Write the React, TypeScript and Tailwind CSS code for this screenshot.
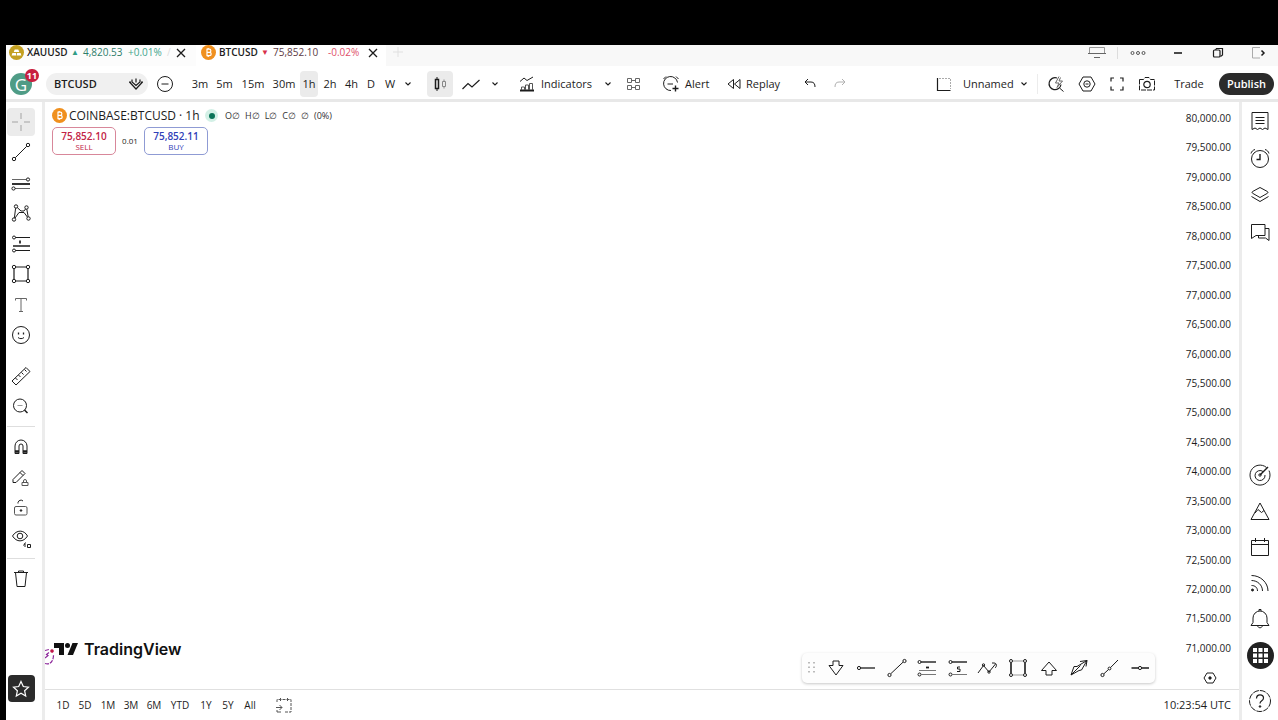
import type { ReactNode } from "react";

function Ic({ children, size = 24, w = 1 }: { children: ReactNode; size?: number; w?: number }) {
  return (
    <svg
      width={size}
      height={size}
      viewBox={`0 0 ${size} ${size}`}
      fill="none"
      stroke="currentColor"
      strokeWidth={w}
      className="shrink-0"
      aria-hidden="true"
    >
      {children}
    </svg>
  );
}

const Chevron = () => (
  <Ic size={12} w={1.1}>
    <path d="M3.500 4.500L6 7l2.500-2.500" />
  </Ic>
);

const BitcoinLogo = () => (
  <svg width="15" height="15" viewBox="0 0 15 15" className="shrink-0" aria-hidden="true">
    <circle cx="7.5" cy="7.5" r="7.5" fill="#f0901e" />
    <path
      d="M5.5 4.2h2.8a1.5 1.5 0 0 1 0 3.1H5.8m2.7 0a1.7 1.7 0 0 1 0 3.4h-3M6 4v7M7.2 3v1.2M7.2 10.8V12"
      stroke="#fff"
      strokeWidth="1.2"
      fill="none"
    />
  </svg>
);

const GoldLogo = () => (
  <svg width="15" height="15" viewBox="0 0 15 15" className="shrink-0" aria-hidden="true">
    <circle cx="7.5" cy="7.5" r="7.5" fill="#c4a021" />
    <path d="M5.700 4.500h3.600l1 2.500H4.700zM3.400 8h3.600l.2 2.500H2.600zM8 8h3.600l.8 2.500H7.800z" fill="#fff" />
  </svg>
);

const CloseX = () => (
  <Ic size={12} w={1.3}>
    <path d="M2 2l8 8M10 2l-8 8" />
  </Ic>
);

const drawTools: [string, ReactNode][] = [
  ["Cross", <path d="M12 3v6M12 15v6M3 12h6M15 12h6" stroke="#a3a3a3" />],
  [
    "Trend line",
    <>
      <circle cx="5" cy="19" r="1.7" />
      <circle cx="19" cy="5" r="1.7" />
      <path d="M6.3 17.7L17.7 6.3" />
    </>,
  ],
  [
    "Fib retracement",
    <>
      <path d="M3 8.500h14.500M6 17.500h15" stroke="#666" />
      <path d="M3 13h18" strokeWidth="1.8" />
      <circle cx="19" cy="8.500" r="1.6" />
      <circle cx="4.500" cy="17.500" r="1.6" />
    </>,
  ],
  [
    "Patterns",
    <>
      <circle cx="7" cy="5.5" r="1.7" />
      <circle cx="17.5" cy="6.5" r="1.7" />
      <circle cx="5" cy="18.5" r="1.7" />
      <circle cx="19.5" cy="17.5" r="1.7" />
      <path d="M6.6 7.2L5.4 16.8M8.3 6.6L12 10h3l1.500-2M6 17l4-5.500h5l3.500 4.700M17.8 8.2l1.4 7.6" />
    </>,
  ],
  [
    "Position",
    <>
      <circle cx="5" cy="5.5" r="1.5" />
      <circle cx="5" cy="18.5" r="1.5" />
      <path d="M6.5 5.5H21M6.5 18.5H21" />
      <path d="M4 14h17M11 8.500v3" strokeWidth="1.7" />
    </>,
  ],
  [
    "Shapes",
    <>
      <path d="M7 5h10M7 19h10M5 7v10M19 7v10" strokeWidth="1.2" />
      <circle cx="5" cy="5" r="1.7" />
      <circle cx="19" cy="5" r="1.7" />
      <circle cx="5" cy="19" r="1.7" />
      <circle cx="19" cy="19" r="1.7" />
    </>,
  ],
  ["Text", <path d="M6.5 7.500V5.500h11v2M12 5.500v13M10 18.500h4" stroke="#666" />],
  [
    "Icons",
    <>
      <circle cx="12" cy="12" r="8.5" />
      <path d="M9.500 9.500v2M14.500 9.500v2" strokeWidth="1.3" />
      <path d="M9 14.500c1.500 1.500 4.500 1.500 6 0" />
    </>,
  ],
];

const measureTools: [string, ReactNode][] = [
  ["Measure", <path d="M3 17L17 3.500l4 4L7 21zM6.500 14l2 2M9.500 11l2 2M12.500 8.500l2 2M15.500 5.500l2 2" />],
  [
    "Zoom in",
    <>
      <circle cx="11" cy="11.500" r="6.500" />
      <path d="M8.500 11.500h5" stroke="#999" />
      <path d="M15.500 16l3 3" strokeWidth="1.500" />
    </>,
  ],
];

const modeTools: [string, ReactNode][] = [
  [
    "Magnet",
    <>
      <path d="M6 18.500V11a6 6 0 0 1 12 0v7.500h-4V11a2 2 0 0 0-4 0v7.500z" />
      <path d="M6 16.500h4M14 16.500h4" strokeWidth="2.500" />
    </>,
  ],
  [
    "Keep drawing",
    <>
      <path d="M4 13.500L13 4.500l3 3-9 9H4zM11 6.500l3 3" />
      <path d="M13 19.500v-3h6v3zM14.500 16.500v-1.500a1.500 1.500 0 0 1 3 0v1.500" stroke="#555" />
    </>,
  ],
  [
    "Lock",
    <>
      <rect x="5.500" y="10.500" width="12.500" height="8.500" rx="1.500" stroke="#555" />
      <path d="M9 7.500V6.500a3 3 0 0 1 5-1.500" />
      <circle cx="12" cy="14.500" r="0.800" fill="currentColor" />
    </>,
  ],
  [
    "Hide",
    <>
      <path d="M3.500 9c4-6.500 11.500-6.500 15 0-4 6.500-11 6.500-15 0z" />
      <circle cx="11" cy="9" r="2.800" />
      <path d="M14.500 18.500l2-3M16 20v-3.500M18.500 20.500h3v-3h-3z" />
    </>,
  ],
];

const sideTop: [string, ReactNode][] = [
  ["Watchlist", <path d="M4 3.500h16v17l-3-1.500-2.500 1.500L12 19l-2.500 1.500L7 19l-3 1.500zM7.500 8.500h9M7.500 11.500h9M7.500 14.500h9" />],
  [
    "Alerts",
    <>
      <circle cx="12" cy="13" r="8.500" />
      <path d="M12 8v5.500H8.500" strokeWidth="1.400" />
      <path d="M3 7.500c.5-2 2-3.500 4-4M21 7.500c-.5-2-2-3.500-4-4" />
    </>,
  ],
  [
    "Layers",
    <>
      <path d="M12 4.500l7 3.800c1.300.7 1.300 1.500 0 2.200l-7 4-7-4c-1.300-.7-1.300-1.500 0-2.200z" />
      <path d="M3.500 13.500L12 18.500l8.500-5" />
    </>,
  ],
  ["Chats", <path d="M3.500 4.500h13.500v11H8l-4.500 3zM17 8.500h4v12l-3.500-2.500h-7v-2.500" />],
];

const sideBottom: [string, ReactNode][] = [
  [
    "Screener",
    <>
      <path d="M18.500 4.500A10 10 0 1 0 22 12a10 10 0 0 0-1-4.400" />
      <path d="M15 8.500a5 5 0 1 0 2 3.500" />
      <path d="M12 12l8-8" strokeWidth="1.400" />
      <circle cx="12" cy="12" r="1.200" />
    </>,
  ],
  ["Pine", <path d="M3 20.500L12 4l9 16.500zM7 14l3-3.500 3.500 3 2.500-2" />],
  ["Calendar", <path d="M3.500 5.500h17v15h-17zM3.500 9.500h17M7.500 3v4M16.500 3v4" />],
  [
    "News flow",
    <>
      <path d="M3.500 4.500c9 0 16.500 7 16.500 15.500M3.500 9.500c6 0 11 4.500 11 10.500M3.500 14.500c3.500 0 6 2 6 5.500" />
      <circle cx="4.500" cy="19" r="1" fill="currentColor" />
    </>,
  ],
  ["Notifications", <path d="M3 18.500l2-3V11a7 7 0 0 1 14 0v4.500l2 3zM9.500 18.500c.5 3 4.500 3 5 0M11 4V2.500h2V4" />],
];

const favorites: [string, ReactNode][] = [
  ["Arrow marker down", <path d="M9 9.500V5h6v4.500M9 9.500H5l7 9.500 7-9.500h-4" />],
  ["Horizontal ray", <><circle cx="5" cy="12" r="1.600" /><path d="M6.600 12H21" strokeWidth="1.300" /></>],
  ["Line", <><circle cx="4.500" cy="19" r="1.600" /><circle cx="19.500" cy="5" r="1.600" /><path d="M6 17.500L18 6.200" /></>],
  ["Fib levels", <><circle cx="4.500" cy="6" r="1.500" /><circle cx="4.500" cy="18.500" r="1.500" /><path d="M6 6h15" strokeWidth="1.400" /><path d="M4 14.500h17M6 18.500h15" stroke="#777" /><path d="M11 11.500h3" strokeWidth="1.800" /></>],
  ["Fib extension", <><circle cx="4.500" cy="6" r="1.500" /><circle cx="4.500" cy="18.500" r="1.500" /><path d="M6 6h15" strokeWidth="1.400" /><path d="M6 18.500h15" stroke="#777" /><path d="M14 11h-2.500v2H14v2.500h-3" /></>],
  ["Polyline", <><path d="M2 17l5.500-7.500L13 16l6.500-8M19 12c2-1.500 2-5-1-5h-2" /><circle cx="7.500" cy="9" r="1.200" /><circle cx="13" cy="16" r="1.200" /></>],
  ["Rectangle", <><path d="M5 7v10M19 7v10" strokeWidth="1.600" /><path d="M7 5h10M7 19h10" stroke="#999" /><circle cx="5" cy="5" r="1.500" /><circle cx="19" cy="5" r="1.500" /><circle cx="5" cy="19" r="1.500" /><circle cx="19" cy="19" r="1.500" /></>],
  ["Arrow marker up", <path d="M9 14.500V19h6v-4.500M9 14.500H4.500L12 6l7.500 8.500H15" />],
  ["Arrow", <path d="M4 19l3-8.500 3 0L20 4.500 14.500 14l-2.500.5zM4 19l9.500-9.500M13 5.500l7-1-1 6" />],
  ["Ray", <><circle cx="4.500" cy="19" r="1.600" /><circle cx="11.500" cy="12.500" r="1.400" /><path d="M6 17.700l4.500-4.200M12.600 11.500L20 4" /></>],
  ["Horizontal line", <><circle cx="12" cy="12" r="1.600" /><path d="M3.500 12h6.900M13.600 12H21" strokeWidth="1.500" /></>],
];

const intervals: [string, string][] = [
  ["3m", "w-6"],
  ["5m", "w-[25px]"],
  ["15m", "w-8"],
  ["30m", "w-[30px]"],
  ["1h", "w-[18px] mx-px bg-[#ebebeb]"],
  ["2h", "w-[22px]"],
  ["4h", "w-[21px]"],
  ["D", "w-[18px]"],
  ["W", "w-5"],
];

const ranges: [string, string][] = [
  ["1D", "w-[22px]"],
  ["5D", "w-[22px]"],
  ["1M", "w-6"],
  ["3M", "w-[22px]"],
  ["6M", "w-6"],
  ["YTD", "w-7"],
  ["1Y", "w-6"],
  ["5Y", "w-5"],
  ["All", "w-6"],
];

const prices = Array.from({ length: 19 }, (_, i) => (80000 - i * 500).toLocaleString("en-US") + ".00");

function ToolGroup({ items, className }: { items: [string, ReactNode][]; className: string }) {
  return (
    <div className={`flex flex-col items-center justify-between ${className}`}>
      {items.map(([name, icon]) => (
        <button
          key={name}
          aria-label={name}
          className={`flex h-7 w-7 items-center justify-center rounded ${name === "Cross" ? "bg-[#ebebeb]" : ""}`}
        >
          <Ic>{icon}</Ic>
        </button>
      ))}
    </div>
  );
}

function IconButton({ label, className, children }: { label: string; className: string; children: ReactNode }) {
  return (
    <button aria-label={label} className={`flex h-[26px] shrink-0 items-center justify-center ${className}`}>
      {children}
    </button>
  );
}

function TabBar() {
  return (
    <div className="flex h-[21px] shrink-0 items-start overflow-hidden bg-[#f8f8f8] text-[10px] leading-[14px]">
      <div className="flex h-full w-[190px] items-start bg-[#fcfcfc] pl-[3px]">
        <GoldLogo />
        <span className="ml-[3px] w-11 font-semibold">XAUUSD</span>
        <span className="w-3 text-[8px] text-[#2f9d85]">▲</span>
        <span className="w-[45px] text-[#2e7d6b]">4,820.53</span>
        <span className="w-[39px] text-[#3fa58c]">+0.01%</span>
        <span className="w-2 text-[#dddddd]">/</span>
        <button aria-label="Close XAUUSD" className="pt-0.5"><CloseX /></button>
      </div>
      <div className="flex h-full w-[190px] items-start bg-white pl-[5px]">
        <BitcoinLogo />
        <span className="ml-[3px] w-[42px] font-semibold">BTCUSD</span>
        <span className="w-3 text-[8px] text-[#d8304a]">▼</span>
        <span className="w-[55px] text-[#5c3a44]">75,852.10</span>
        <span className="w-[39px] text-[#e0506a]">-0.02%</span>
        <button aria-label="Close BTCUSD" className="pt-0.5"><CloseX /></button>
      </div>
      <button aria-label="New tab" className="flex w-6 justify-center text-[#e0e0e0]">
        <Ic size={14}><path d="M7 2v10M2 7h10" /></Ic>
      </button>
      <div className="ml-auto flex h-[15px] items-center">
        <button aria-label="Desktop" className="flex w-10 justify-center">
          <Ic size={18}><path d="M1.500 9V3.500h15V9" stroke="#999" /><path d="M0 9.500h18M6 13.500h6" stroke="#666" strokeWidth="1.200" /></Ic>
        </button>
        <span className="h-3 w-px bg-[#dddddd]" />
        <button aria-label="More" className="flex w-10 justify-center text-[#555555]">
          <Ic size={16}><circle cx="2.500" cy="8" r="1.500" /><circle cx="8" cy="8" r="1.500" /><circle cx="13.500" cy="8" r="1.500" /></Ic>
        </button>
        <button aria-label="Minimize" className="flex w-10 justify-center">
          <Ic size={12} w={1.600}><path d="M2 6h8" /></Ic>
        </button>
        <button aria-label="Restore" className="flex w-10 justify-center">
          <Ic size={12} w={1.200}><rect x="1.500" y="3" width="6.500" height="7" rx="1" /><path d="M3.500 3l1-1.500h6V8L8.500 9.500" /></Ic>
        </button>
        <button aria-label="Close window" className="flex w-10 justify-center">
          <Ic size={16}><path d="M10 2.500H2.500v10.500H10" stroke="#aaa" /><path d="M11.500 5.500L14 8l-2.500 2.500" strokeWidth="1.500" /></Ic>
        </button>
      </div>
    </div>
  );
}

function Header() {
  return (
    <header className="flex h-9 shrink-0 items-center border-b-[3px] border-[#e8e8e8] pt-[3px] text-[11px] font-medium">
      <button aria-label="Account" className="relative ml-1 flex h-[22px] w-[22px] shrink-0 items-center justify-center rounded-full bg-[#4f9c86] text-[17px] leading-none text-white">
        G
        <span className="absolute -top-1 -right-[7px] flex h-[13px] w-[14px] items-center justify-center rounded-full bg-[#c8203f] text-[9px] font-bold">
          11
        </span>
      </button>
      <button className="ml-3.5 flex h-[22px] w-[102px] shrink-0 items-center rounded-full bg-[#f0f0f0] pl-2 font-semibold">
        BTCUSD
        <span className="mr-[3px] ml-auto">
          <Ic size={18} w={1.200}>
            <path d="M2.500 7L9 14l6.500-7M5 4.500v2.500L9 10.500 13 7V4.500M9 3.500v4M2 7h2M14 7h2" />
          </Ic>
        </span>
      </button>
      <IconButton label="Compare" className="w-[34px]">
        <Ic size={18}><circle cx="9" cy="9" r="7.500" /><path d="M5.500 9h7" /></Ic>
      </IconButton>
      <nav className="ml-1.5 flex shrink-0 items-center">
        {intervals.map(([t, w]) => (
          <button key={t} className={`flex h-[26px] items-center justify-center rounded ${w}`}>
            {t}
          </button>
        ))}
        <IconButton label="More intervals" className="w-4"><Chevron /></IconButton>
      </nav>
      <IconButton label="Candles" className="ml-[11px] w-[26px] rounded bg-[#ebebeb]">
        <Ic size={18}>
          <rect x="4.500" y="4.500" width="3" height="9" strokeWidth="1.500" />
          <path d="M6 2v2M6 14v2" />
          <path d="M11.500 6.500h3v5h-3zM13 4.500v2M13 11.500v2" stroke="#888" />
        </Ic>
      </IconButton>
      <IconButton label="Line style" className="ml-1.5 w-6">
        <Ic size={18} w={1.200}><path d="M.5 14l5.500-5.500 4 3.500L17.500 5" /></Ic>
      </IconButton>
      <IconButton label="Chart types" className="w-6"><Chevron /></IconButton>
      <button className="ml-[11px] flex h-[26px] shrink-0 items-center gap-[5px]">
        <Ic size={18}>
          <path d="M2 6.500l4-3.500 3 2.500L15 2" />
          <path d="M2 15.500h14" strokeWidth="2" />
          <path d="M3.500 15v-3h3v3M7.500 15v-5h3v5M11.500 15V8.500h3V15" stroke="#555" />
        </Ic>
        <span className="w-[51px] text-left">Indicators</span>
      </button>
      <IconButton label="Favorite indicators" className="ml-[7px] w-[18px]"><Chevron /></IconButton>
      <IconButton label="Templates" className="ml-2 w-[18px] text-[#666666]">
        <Ic size={18}><path d="M2.500 3.500h4v4h-4zM10.500 3.500h4v4h-4zM2.500 10.500h4v4h-4zM10.500 10.500h4v4h-4zM6.500 5.500h4M6.500 12.500h4" /></Ic>
      </IconButton>
      <button className="ml-[19px] flex h-[26px] shrink-0 items-center gap-[5px]">
        <Ic size={18}>
          <path d="M15.500 7.500A7 7 0 1 0 9 15.500M5.500 9H11M1.500 4L4 1.500M14 1.500L16.500 4" />
          <path d="M13.500 10.500v6M10.500 13.500h6" strokeWidth="1.400" />
        </Ic>
        <span className="w-[26px] text-left">Alert</span>
      </button>
      <button className="ml-[15px] flex h-[26px] shrink-0 items-center gap-1">
        <Ic size={16}><path d="M7.500 3.500v9L2 8zM14 3.500v9L8.500 8z" /></Ic>
        <span className="w-[34px] text-left">Replay</span>
      </button>
      <IconButton label="Undo" className="ml-[15px] w-[30px]">
        <Ic size={14}><path d="M5 2L2 5l3 3M2 5h6c3 0 4 2 4 5" /></Ic>
      </IconButton>
      <IconButton label="Redo" className="w-[30px] text-[#b0b0b0]">
        <Ic size={14}><path d="M9 2l3 3-3 3M12 5H6c-3 0-4 2-4 5" /></Ic>
      </IconButton>
      <div className="ml-auto flex shrink-0 items-center pr-1">
        <button className="flex h-[26px] items-center gap-2.5">
          <Ic size={18}><path d="M4 3.500h11.500V14" stroke="#aaa" strokeDasharray="2 1" /><path d="M2.500 3v12.500h13" strokeWidth="1.200" /></Ic>
          <span className="w-12 text-left">Unnamed</span>
        </button>
        <IconButton label="Layouts" className="ml-[7px] w-3"><Chevron /></IconButton>
        <span className="ml-[7px] h-5 w-px bg-[#ececec]" />
        <IconButton label="Quick search" className="ml-0.5 w-8">
          <Ic size={18}><path d="M10 3A6 6 0 1 0 14 9.500" strokeWidth="1.200" /><path d="M12.500 13l4 3.500" /><path d="M12 1.500L8.500 8H12l-2 4.500 5.500-6.500H12l1.500-3.500" stroke="#666" /></Ic>
        </IconButton>
        <IconButton label="Chart settings" className="w-[30px]">
          <Ic size={18}><path d="M5 2h8l4 7-4 7H5L1 9z" /><circle cx="9" cy="9" r="3.200" /><path d="M7.500 9h3" /></Ic>
        </IconButton>
        <IconButton label="Fullscreen" className="w-[30px]">
          <Ic size={18} w={1.200}><path d="M6 3H3v3.500M12 3h3v3.500M3 11.500V15h3M15 11.500V15h-3" /></Ic>
        </IconButton>
        <IconButton label="Snapshot" className="w-[30px]">
          <Ic size={18}><path d="M1.500 4.500h4L7 2.500h4l1.500 2h4v10.500h-15z" strokeDasharray="5 1" /><circle cx="9" cy="9.500" r="3.200" strokeWidth="1.200" /></Ic>
        </IconButton>
        <button className="ml-2 w-[38px] text-center">Trade</button>
        <button className="ml-[11px] h-[22px] w-[55px] rounded-full bg-[#2b2b2b] text-center font-semibold text-white">Publish</button>
      </div>
    </header>
  );
}

function Chart() {
  return (
    <main className="relative flex min-h-0 flex-1">
      <div className="flex min-w-0 flex-1 flex-col pt-1.5 pl-[7px]">
        <div className="flex h-[15px] items-center">
          <BitcoinLogo />
          <h1 className="ml-0.5 w-[130px] text-[12px] leading-[15px] font-medium whitespace-nowrap">COINBASE:BTCUSD · 1h</h1>
          <span className="ml-1.5 flex h-[13px] w-[13px] items-center justify-center rounded-full bg-[#d3f0e6]">
            <span className="h-1.5 w-1.5 rounded-full bg-[#0b7358]" />
          </span>
          <div className="ml-[7px] flex gap-[5px] text-[9px] text-[#333333]">
            <span>O∅</span>
            <span>H∅</span>
            <span>L∅</span>
            <span>C∅</span>
            <span>∅</span>
            <span>(0%)</span>
          </div>
        </div>
        <div className="mt-1 flex items-center">
          <button className="flex h-7 w-16 flex-col items-center justify-center rounded-[5px] border border-[#d8879a] text-[#c22346]">
            <span className="text-[10px] leading-[12px] font-semibold">75,852.10</span>
            <span className="text-[8px] leading-[10px]">SELL</span>
          </button>
          <span className="w-7 text-center text-[8px]">0.01</span>
          <button className="flex h-7 w-16 flex-col items-center justify-center rounded-[5px] border border-[#8f9bd4] text-[#3040b8]">
            <span className="text-[10px] leading-[12px] font-semibold">75,852.11</span>
            <span className="text-[8px] leading-[10px]">BUY</span>
          </button>
        </div>
        <div className="mt-auto mb-[30px] flex items-center gap-1.5 pl-0.5">
          <svg width="24" height="12" viewBox="0 0 24 12" fill="#111" aria-hidden="true">
            <path d="M0 0h10v12H5V5H0z" />
            <circle cx="13.500" cy="2.500" r="2.500" />
            <path d="M18.500 0H24l-5 12h-5.500z" />
          </svg>
          <span className="font-['Inter'] text-[16px] leading-5 font-semibold text-[#111111]">TradingView</span>
        </div>
      </div>
      <div className="flex w-14 shrink-0 flex-col pr-2 text-right text-[10px]">
        <ol className="mt-2.5 flex flex-1 flex-col justify-between leading-[12px]">
          {prices.map((p) => (
            <li key={p}>{p}</li>
          ))}
        </ol>
        <button aria-label="Scale settings" className="mt-[17px] mb-[4px] flex justify-end pr-[14px]">
          <Ic size={14}><path d="M4 2h6l3 5-3 5H4L1 7z" /><circle cx="7" cy="7" r="1.200" fill="currentColor" /></Ic>
        </button>
      </div>
      <div className="absolute bottom-6 left-0 text-[#8e2a9c]">
        <svg width="10" height="17" viewBox="0 0 10 17" fill="none" stroke="currentColor" strokeWidth="1.200" aria-hidden="true">
          <path d="M0 15.500c5 1.500 8.500-2 8.500-8.500M0 2.500l4-1" strokeDasharray="4 1" />
          <path d="M0 10l3-2.500-1.500-1L4 4.500" />
          <circle cx="7" cy="3" r="1.200" fill="#c0184a" stroke="#c0184a" />
        </svg>
      </div>
      <div className="absolute right-[84px] bottom-1.5 flex h-[30px] w-[353px] items-center rounded-[5px] bg-[#fdfdfd] pl-1 shadow-[0_1px_3px_rgba(0,0,0,0.22)]">
        <span className="flex w-[15px] text-[#bbbbbb]">
          <Ic size={12} w={2}><path d="M3 0v12M8 0v12" strokeDasharray="1.500 3" /></Ic>
        </span>
        <div className="flex flex-1 justify-between">
          {favorites.map(([name, icon]) => (
            <button key={name} aria-label={name} className="flex h-[26px] w-[30px] items-center justify-center">
              <Ic>{icon}</Ic>
            </button>
          ))}
        </div>
      </div>
    </main>
  );
}

export default function App() {
  return (
    <div className="flex min-h-screen flex-col bg-black pt-[45px] pl-1.5 font-['Open_Sans','Noto_Sans',sans-serif] text-[#1c1c1c]">
      <div className="flex flex-1 flex-col bg-white">
        <TabBar />
        <Header />
        <div className="flex flex-1">
          <aside className="flex w-9 shrink-0 flex-col items-center pt-1.5 pr-1.5">
            <ToolGroup items={drawTools} className="h-[241px]" />
            <ToolGroup items={measureTools} className="mt-[13px] h-[58px]" />
            <span className="mt-1.5 h-px w-7 shrink-0 bg-[#dedede]" />
            <ToolGroup items={modeTools} className="mt-1.5 h-[120px]" />
            <span className="mt-[5px] h-px w-7 shrink-0 bg-[#dedede]" />
            <button aria-label="Remove drawings" className="mt-1.5 flex h-7 w-7 items-center justify-center">
              <Ic><path d="M5 5.500h14M9.500 5.500V4h5v1.500M6.500 5.500L8 19.500h8l1.500-14" /></Ic>
            </button>
            <button aria-label="Favorites toolbar" className="mt-auto mb-[18px] flex h-[27px] w-[27px] items-center justify-center rounded bg-[#2b2b2b] text-white">
              <Ic size={20} w={1.200}><path d="M10 2.500l2.300 5 5.200.6-3.900 3.600 1.100 5.300-4.700-2.700L5.300 17l1.100-5.300L2.500 8.100l5.200-.6z" /></Ic>
            </button>
          </aside>
          <div className="flex min-w-0 flex-1 flex-col border-l-[3px] border-[#ececec]">
            <Chart />
            <footer className="flex h-[31px] shrink-0 items-center border-t border-[#e0e0e0] pr-2 pl-[7px] text-[10px] font-medium">
              {ranges.map(([r, w]) => (
                <button key={r} className={`text-center whitespace-nowrap ${w}`}>
                  {r}
                </button>
              ))}
              <button aria-label="Go to date" className="ml-[13px] text-[#555555]">
                <Ic size={18}><path d="M2 6V3.500h14V16H9M5.500 2v3M12.500 2v3" strokeDasharray="3 1" /><path d="M1 11.500h6M4.500 9L7 11.500 4.500 14M2 14v2h4" /></Ic>
              </button>
              <button className="ml-auto text-[11px]">10:23:54 UTC</button>
            </footer>
          </div>
          <aside className="flex w-[39px] shrink-0 flex-col items-center border-l-[3px] border-[#ececec] pt-[5px] pb-[5px]">
            <ToolGroup items={sideTop} className="h-[139px]" />
            <ToolGroup items={sideBottom} className="mt-auto h-[172px]" />
            <button aria-label="Products" className="mt-[9px] flex h-[27px] w-[27px] items-center justify-center rounded-full bg-[#222222] text-white">
              <svg width="17" height="17" viewBox="0 0 17 17" fill="currentColor" aria-hidden="true">
                <path d="M1 1h4v4H1zM6.500 1h4v4h-4zM12 1h4v4h-4zM1 6.500h4v4H1zM6.500 6.500h4v4h-4zM12 6.500h4v4h-4zM1 12h4v4H1zM6.500 12h4v4h-4zM12 12h4v4h-4z" />
              </svg>
            </button>
            <button aria-label="Help" className="mt-[18px] flex h-7 w-7 items-center justify-center">
              <Ic><circle cx="12" cy="12" r="10.500" strokeDasharray="6 1" /><path d="M8.500 9.500c0-5 7-4.500 7-.5 0 3-3.500 2.500-3.500 5.500" strokeWidth="1.200" /><circle cx="12" cy="17.500" r="0.800" fill="currentColor" /></Ic>
            </button>
          </aside>
        </div>
      </div>
    </div>
  );
}
